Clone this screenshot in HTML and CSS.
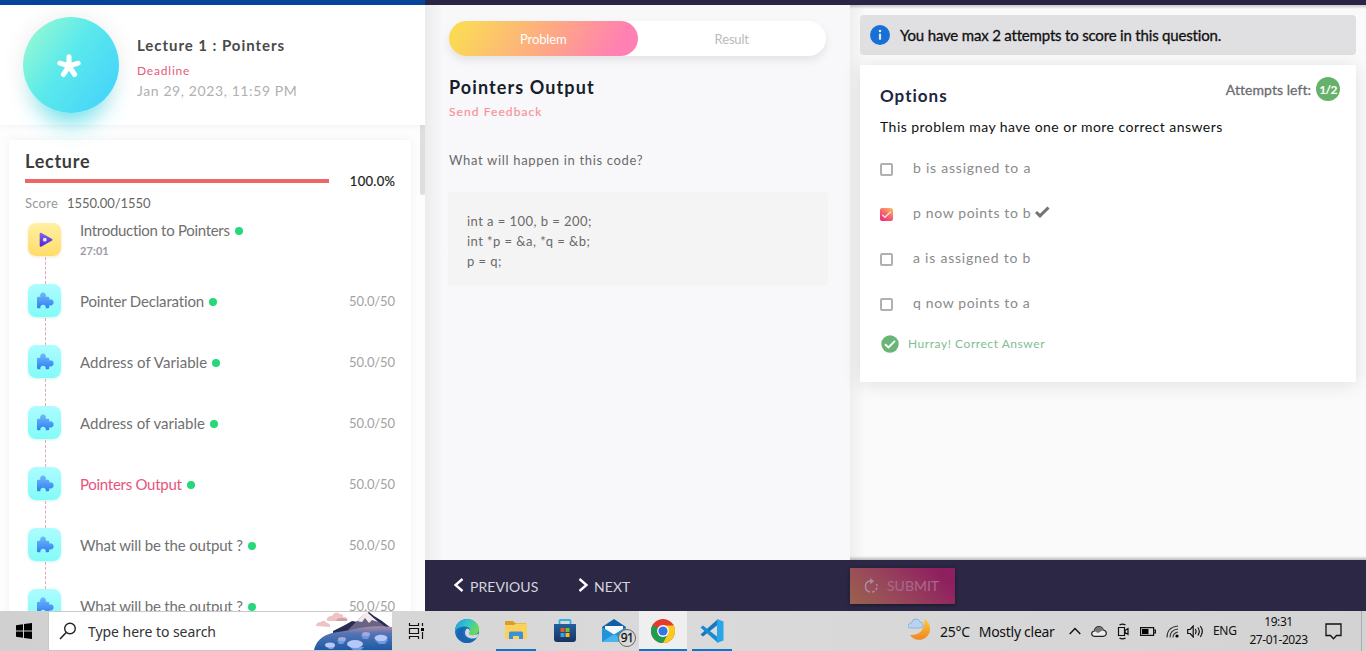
FILE: index.html
```html
<!DOCTYPE html>
<html lang="en">
<head>
<meta charset="utf-8">
<title>Lecture 1 : Pointers</title>
<link rel="stylesheet" href="styles.css">
</head>
<body>
<svg class="defs" width="0" height="0">
  <defs>
    <linearGradient id="puzzleFill" x1="0" y1="0" x2="0" y2="1"><stop offset="0" stop-color="#71b8fb"/><stop offset="1" stop-color="#2f80f0"/></linearGradient>
    <linearGradient id="playFill" x1="0" y1="0" x2="0" y2="1"><stop offset="0" stop-color="#8265e8"/><stop offset="1" stop-color="#5420d8"/></linearGradient>
    <symbol id="puzzle" viewBox="0 0 17 17"><path fill="url(#puzzleFill)" d="M1.200 4.800H3.400A2.900 2.900 0 1 1 8.600 4.800H11Q12.200 4.800 12.200 6V7.600A3.100 3.100 0 1 1 12.200 13.200V15Q12.200 16.200 11 16.200H8.800A2.800 2.800 0 1 0 3.400 16.200H1.200Q0 16.200 0 15V6Q0 4.800 1.200 4.800z"/></symbol>
  </defs>
</svg>
<div class="page">
  <div class="workspace">
    <aside class="sidebar">
      <header class="lecture-head">
        <div class="avatar"><svg width="24" height="24" viewBox="0 0 24 24"><g stroke="#fff" stroke-width="5" stroke-linecap="round"><path d="M12 12V2.800M12 12L2.800 9.200M12 12l9.200-2.800M12 12L6.400 20.500M12 12l5.600 8.500"/></g></svg></div>
        <div class="lecture-info">
          <div class="lecture-title">Lecture 1 : Pointers</div>
          <div class="deadline">Deadline</div>
          <div class="due">Jan 29, 2023, 11:59 PM</div>
        </div>
      </header>
      <div class="lecture-scroll">
        <div class="scroll-thumb"></div>
        <section class="lecture-card">
          <h2>Lecture</h2>
          <div class="progress-row"><div class="progress"></div><span>100.0%</span></div>
          <div class="score"><span>Score</span><b>1550.00/1550</b></div>
          <ul class="steps">
            <li><i class="tile video"><svg width="14" height="16" viewBox="0 0 14 16"><path fill="url(#playFill)" d="M.7 2.200Q.7.200 2.500 1l10.200 5.700q1.600 1 0 2L2.500 14.600Q.7 15.400.7 13.400z"/><circle cx="5.800" cy="7.700" r="1.900" fill="#c9f6ff"/></svg></i><div class="name intro">Introduction to Pointers<em></em><small>27:01</small></div></li>
            <li><i class="tile"><svg width="17" height="17"><use href="#puzzle"/></svg></i><div class="name n2">Pointer Declaration<em></em></div><span class="pts">50.0/50</span></li>
            <li><i class="tile"><svg width="17" height="17"><use href="#puzzle"/></svg></i><div class="name n3">Address of Variable<em></em></div><span class="pts">50.0/50</span></li>
            <li><i class="tile"><svg width="17" height="17"><use href="#puzzle"/></svg></i><div class="name n4">Address of variable<em></em></div><span class="pts">50.0/50</span></li>
            <li><i class="tile"><svg width="17" height="17"><use href="#puzzle"/></svg></i><div class="name n5 current">Pointers Output<em></em></div><span class="pts">50.0/50</span></li>
            <li><i class="tile"><svg width="17" height="17"><use href="#puzzle"/></svg></i><div class="name n6">What will be the output ?<em></em></div><span class="pts">50.0/50</span></li>
            <li><i class="tile"><svg width="17" height="17"><use href="#puzzle"/></svg></i><div class="name n6">What will be the output ?<em></em></div><span class="pts">50.0/50</span></li>
          </ul>
        </section>
      </div>
    </aside>
    <main class="main">
      <div class="topbar"></div>
      <div class="panes">
        <section class="problem">
          <div class="tabs"><div class="tab active">Problem</div><div class="tab">Result</div></div>
          <h1>Pointers Output</h1>
          <div class="feedback">Send Feedback</div>
          <p class="question">What will happen in this code?</p>
          <div class="code"><div>int a = 100, b = 200;</div><div>int *p = &amp;a, *q = &amp;b;</div><div>p = q;</div></div>
        </section>
        <section class="answer">
          <div class="notice"><svg width="20" height="20" viewBox="0 0 20 20"><circle cx="10" cy="10" r="10" fill="#1a6fd6"/><circle cx="10" cy="6" r="1.300" fill="#dcebfc"/><path d="M10 8.700v6" stroke="#dcebfc" stroke-width="2.200"/></svg><span>You have max 2 attempts to score in this question.</span></div>
          <div class="options">
            <div class="options-head"><h2>Options</h2><div class="attempts"><span>Attempts left:</span><b>1/2</b></div></div>
            <p class="hint">This problem may have one or more correct answers</p>
            <div class="option"><i class="box"></i><span>b is assigned to a</span></div>
            <div class="option"><i class="box checked"><svg width="13" height="13" viewBox="0 0 13 13"><path d="M2.300 6.800l2.700 2.500 5.700-5.500" fill="none" stroke="#ffe3dc" stroke-width="1.300"/></svg></i><span class="p">p now points to b</span><svg class="tick" width="15" height="12" viewBox="0 0 15 12"><path d="M1 6l4 3.800L13.500 1.500" fill="none" stroke="#737373" stroke-width="3"/></svg></div>
            <div class="option"><i class="box"></i><span>a is assigned to b</span></div>
            <div class="option"><i class="box"></i><span class="p">q now points to a</span></div>
            <div class="success"><svg width="18" height="18" viewBox="0 0 18 18"><circle cx="9" cy="9" r="8.700" fill="#69b578"/><path d="M4 9.200l3.500 3.300L14 5.800" fill="none" stroke="#fff" stroke-width="1.900"/></svg><span>Hurray! Correct Answer</span></div>
          </div>
        </section>
      </div>
      <footer class="actions">
        <div class="nav prev"><svg width="10" height="14" viewBox="0 0 10 14"><path d="M8.500 1L1.500 7l7 6" fill="none" stroke="#fff" stroke-width="2.400"/></svg><span>PREVIOUS</span></div>
        <div class="nav next"><svg width="10" height="14" viewBox="0 0 10 14"><path d="M1.500 1l7 6-7 6" fill="none" stroke="#fff" stroke-width="2.400"/></svg><span>NEXT</span></div>
        <div class="submit"><svg width="14" height="16" viewBox="0 0 14 16"><g fill="none" stroke="#a98ba7" stroke-width="1.500"><path d="M6 14A5.600 5.600 0 0 1 6 3h2"/><path d="M8 14a5.600 5.600 0 0 0 4.500-8" stroke-dasharray="2.600 1.700"/></g><path d="M6.200 0L10 3.200 6.200 6.200z" fill="#a98ba7"/></svg><span>SUBMIT</span></div>
      </footer>
    </main>
  </div>
  <nav class="taskbar">
    <div class="start"><svg width="16" height="16" viewBox="0 0 16 16"><path d="M0 2.300l7-1V7.600H0zM8 1.100L16 0v7.600H8zM0 8.500h7v6.300l-7-1zM8 8.500h8V16l-8-1.100z"/></svg></div>
    <div class="search"><svg class="lens" width="18" height="18" viewBox="0 0 18 18"><circle cx="11" cy="6.500" r="5.300" fill="none" stroke="#222" stroke-width="1.400"/><path d="M7.200 10.500L1 17" stroke="#222" stroke-width="1.600"/></svg><span>Type here to search</span>
      <svg class="scene" width="78" height="38" viewBox="0 0 78 38">
        <defs><linearGradient id="lake" x1="0" y1="0" x2="0" y2="1"><stop offset="0" stop-color="#b18ba6"/><stop offset=".3" stop-color="#5575b5"/><stop offset="1" stop-color="#1c5aa5"/></linearGradient></defs>
        <path d="M13 9q-1-5 5-5 3-6 8-2 4 0 3 3 6 0 4 4zM2 14q0-4 5-4 3-3 6 1 4 1 3 4z" fill="#edc3c5"/><path d="M22 9q2-5 11-2v2z" fill="#d69ca7"/>
        <path d="M19 19l12-6 7-4 6 1 6-7 5-3 5 4 8 5 9 7v9H19z" fill="#2a2c55"/><path d="M38 14l10-10 4-3 6 4 7 5 11 8H34z" fill="#686483"/><path d="M43 9l8-8 3 0 10 9-6-2-3 3-4-5-3 4z" fill="#f4e9ed"/>
        <path d="M0 38q3-13 18-17 14-2 28-5t32-1v23z" fill="url(#lake)"/>
        <g fill="#6d99e2"><path d="M13 34l2 3h4l2-3z"/><path d="M36 35l3 3h8l3-3z"/><path d="M61 28l4 4h6l3-4zM47 23l2 4h5l2-4zM23 28l2 4h4l3-4z"/></g><g fill="#b6c8f7"><ellipse cx="16" cy="33" rx="5" ry="2.600"/><ellipse cx="41" cy="32" rx="8" ry="4"/><ellipse cx="67" cy="26" rx="6.500" ry="3.300"/><ellipse cx="52" cy="22" rx="4" ry="2" fill="#a9a8d5"/><ellipse cx="28" cy="27" rx="4" ry="2" fill="#a9a8d5"/></g>
      </svg>
    </div>
    <div class="app view"><svg width="17" height="16" viewBox="0 0 17 16"><path d="M1.500 0v2.500h9V0M1.500 16v-2.500h9V16M1.500 5.500h9v5h-9zM14.500 0v3M14.500 9v7" fill="none" stroke="#111" stroke-width="1.200"/><path d="M13 5h3v3h-3z"/></svg></div>
    <div class="app"><svg width="24" height="24" viewBox="0 0 24 24"><defs><linearGradient id="edgeTop" x1="0" y1="0" x2="1" y2=".5"><stop offset="0" stop-color="#2497d9"/><stop offset=".5" stop-color="#31c4d0"/><stop offset="1" stop-color="#68dc55"/></linearGradient></defs><circle cx="12" cy="12" r="12" fill="#176fbd"/><path d="M0 12C0 5 5.500 0 12 0s12 5 12 10c0 4-3 6.200-6.500 6.200-3 0-4-1.500-3-2.800 2-2.600-.4-6-4.500-6S1 9 0 13z" fill="url(#edgeTop)"/><path d="M9 10c-3 5 1 11 7 11q4 0 6-3-4 6-10 6C5 24 1 18 3 13q2-4 6-3z" fill="#1b63ae"/><path d="M14.500 13.400c-1 1.300 0 2.800 3 2.800 2 0 3.700-.5 5.800-1.700L22.600 18q-3.600 2.500-8 1C9 17.500 9 12 12 9.500q4 1 2.500 3.900z" fill="#d8d8da"/></svg></div>
    <div class="app open explorer"><svg width="22" height="20" viewBox="0 0 22 20"><path d="M0 1q0-1 1-1h7l2 2h11v3H0z" fill="#dd9e20"/><path d="M0 4h9l2-1.500h11V18H0z" fill="#fbd15d"/><path d="M4 18v-6q0-1.500 1.500-1.500h11Q18 10.500 18 12v6h-4v-3H8v3z" fill="#3a91d8"/></svg></div>
    <div class="app"><svg width="24" height="24" viewBox="0 0 24 24"><defs><linearGradient id="store" x1="0" y1="0" x2="0" y2="1"><stop offset="0" stop-color="#245f9e"/><stop offset="1" stop-color="#18325f"/></linearGradient></defs><path d="M6.500 6V1.800q0-.8.800-.8h9.400q.8 0 .8.800V6" fill="none" stroke="#2fb3e6" stroke-width="1.800"/><path d="M1 5h22v15q0 3-3 3H4q-3 0-3-3z" fill="url(#store)"/><path d="M7.500 9h4v4h-4z" fill="#f05325"/><path d="M12.500 9h4v4h-4z" fill="#80ba30"/><path d="M7.500 14h4v4h-4z" fill="#2aa5e9"/><path d="M12.500 14h4v4h-4z" fill="#fbba12"/></svg></div>
    <div class="app mail"><svg width="24" height="24" viewBox="0 0 24 24"><path d="M0 8L12 0l12 8v15H0z" fill="#0f5fa8"/><path d="M3 7h18v8H3z" fill="#f5f9fd"/><path d="M0 8l12 7.500L24 8v15H0z" fill="#2294da"/><path d="M0 23l12-8 12 8z" fill="#48b5ec"/></svg><span class="count">91</span></div>
    <div class="app active open"><svg width="24" height="24" viewBox="0 0 24 24"><circle cx="12" cy="12" r="12" fill="#e33b2e"/><path d="M12 12L1.600 6A12 12 0 0 0 12 24l6-9z" fill="#219c4f"/><path d="M12 6.500h10.700A12 12 0 0 1 12 24l5-9.300z" fill="#fbc820"/><circle cx="12" cy="12" r="5.900" fill="#fff"/><circle cx="12" cy="12" r="4.600" fill="#3473e8"/></svg></div>
    <div class="app open vscode"><svg width="24" height="24" viewBox="0 0 24 24"><path d="M17.500 6L3 17.500.5 15.500 17.500.5z" fill="#1678be"/><path d="M17.500 18L3 6.500.5 8.500l17 15z" fill="#168dd2"/><path d="M17 0l6.500 2.600v18.800L17 24z" fill="#2aa5ea"/></svg></div>
    <div class="weather"><svg width="24" height="24" viewBox="0 0 24 24"><defs><linearGradient id="moon" x1="0" y1="0" x2="0" y2="1"><stop offset="0" stop-color="#ffc83d"/><stop offset="1" stop-color="#ee8724"/></linearGradient></defs><path d="M16 1a11 11 0 1 1-14 16q9 0 12-5t2-11z" fill="url(#moon)"/><path d="M3 10q-4 0-2.500-3Q1 5 3.500 5 4 1 8 1q3 0 4 3 3 0 3 3t-3 3z" fill="#b9d3f1" stroke="#7fa9d9" stroke-width=".8"/></svg><span>25°C</span><span class="sky">Mostly clear</span></div>
    <div class="tray">
      <svg class="t1" width="12" height="8" viewBox="0 0 12 8"><path d="M.7 7L6 1.500 11.300 7" fill="none" stroke="#111" stroke-width="1.400"/></svg>
      <svg class="t2" width="16" height="11" viewBox="0 0 16 11"><path d="M3.500 10.300Q.7 10 .7 7.700T3.300 5q1-4.300 4.700-4.300Q11 .7 12.300 4q3 .5 3 3.300T12 10.300z" fill="#ededed" stroke="#222" stroke-width="1.200"/><path d="M3.300 5Q5 .7 8 .7T12.300 4L7 7z" fill="#777"/></svg>
      <svg class="t3" width="12" height="17" viewBox="0 0 12 17"><path d="M2.500 2q3-1.800 6 0M2.500 15q3 1.800 6 0M1.500 4.500h6v8h-6zM8 7.500l3-2v6l-3-2z" fill="none" stroke="#111" stroke-width="1.200"/></svg>
      <svg class="t4" width="16" height="9" viewBox="0 0 16 9"><path d="M.6.600h13v7.800H.6zM14 3h1.400v3H14" fill="none" stroke="#111" stroke-width="1.200"/><path d="M2 2h6.500v5H2z"/></svg>
      <svg class="t5" width="13" height="13" viewBox="0 0 13 13"><path d="M1 12.500Q1 2 12 1M4 12.500Q4 5 12 4M7 12.500Q7 8 12 7" fill="none" stroke="#333" stroke-width="1.100"/><circle cx="11" cy="11" r="1.600"/></svg>
      <svg class="t6" width="17" height="13" viewBox="0 0 17 13"><path d="M.7 4.500h2.500l3-3.500v11l-3-3.500H.7zM8.300 4q1.500 2.500 0 5M10.800 2.500q3 4 0 8M13.300 1q4 5.500 0 11" fill="none" stroke="#111" stroke-width="1.200"/></svg>
      <span class="lang">ENG</span>
      <div class="clock"><span>19:31</span><span>27-01-2023</span></div>
      <svg class="t7" width="17" height="17" viewBox="0 0 17 17"><path d="M1 1h15v11.500h-4.500L8.500 15.700 5.500 12.500H1z" fill="none" stroke="#111" stroke-width="1.300"/></svg>
    </div>
  </nav>
</div>
</body>
</html>
```
FILE: styles.css
```css
* { box-sizing: border-box; }
body { margin: 0; width: 1366px; height: 651px; overflow: hidden; font-family: Lato, "Open Sans", sans-serif; font-variant-ligatures: none; background: #f8f8fb; }
h1, h2, p, ul { margin: 0; padding: 0; }
.defs { position: absolute; }
svg { display: block; flex: none; }
span, .name, h1, h2 { white-space: nowrap; }
.page { display: flex; flex-direction: column; height: 651px; }
.workspace { display: flex; height: 611px; }

.sidebar { width: 425px; border-top: 5px solid #07439b; background: #fdfdfd; overflow: hidden; flex: none; }
.lecture-head { position: relative; display: flex; height: 120px; padding: 12px 0 0 22.500px; background: #fff; box-shadow: 0 1px 5px rgba(0,0,0,.05); z-index: 1; }
.avatar { width: 96px; height: 96px; border-radius: 50%; background: linear-gradient(125deg, #9dfbcf 3%, #5be9ec 45%, #43d1fc 95%); box-shadow: 0 24px 24px -14px rgba(45,218,232,.7), 0 0 24px rgba(0,0,0,.08); padding: 37px 0 0 34px; }
.lecture-info { padding: 18px 0 0 18.500px; }
.lecture-title { font-size: 15px; font-weight: 700; line-height: 20px; letter-spacing: .95px; color: #4a4a4a; }
.deadline { margin-top: 6px; font-size: 12px; line-height: 20px; letter-spacing: .8px; color: #e8587a; }
.due { font-size: 14px; line-height: 20px; letter-spacing: .6px; color: #b0b0b0; }
.lecture-scroll { position: relative; height: 486px; padding: 15px 14px 0 9px; }
.scroll-thumb { position: absolute; left: 420px; top: 0; width: 5px; height: 70px; border-radius: 0 0 3px 3px; background: #dedede; }
.lecture-card { height: 560px; padding: 10px 16px 0; background: #fff; box-shadow: 0 0 8px rgba(0,0,0,.05); }
.lecture-card h2 { font-size: 18px; line-height: 23px; font-weight: 700; letter-spacing: .75px; color: #3c3c3c; }
.progress-row { display: flex; align-items: center; justify-content: space-between; height: 16px; }
.progress-row span { font-size: 13px; color: #222; letter-spacing: .3px; margin-right: -.3px; -webkit-text-stroke: .2px #222; }
.progress { width: 304px; height: 4px; background: #ee6667; }
.score { display: flex; gap: 9px; margin-top: 4px; font-size: 13px; line-height: 20px; color: #999; }
.score span { width: 33px; letter-spacing: .25px; }
.score b { font-weight: 400; color: #666; letter-spacing: -.08px; }
.steps { list-style: none; padding-top: 10px; }
.steps li { position: relative; display: flex; height: 61px; padding-left: 3px; }
.steps li::before { content: ""; position: absolute; left: 20px; top: 34px; height: 27px; border-left: 1px dashed #e8a6ae; }
.tile { width: 33px; height: 33px; border-radius: 8px; background: linear-gradient(#adfcff, #82fbf7); box-shadow: 0 1px 3px rgba(100,220,220,.3); display: flex; align-items: center; justify-content: center; flex: none; padding-left: 2px; }
.tile.video { background: linear-gradient(#fff0a4, #ffdc69); box-shadow: 0 1px 3px rgba(220,180,80,.3); padding-left: 3px; }
.name { margin: 7px 0 0 19px; font-size: 15px; line-height: 20px; color: #707070; }
.name.intro { margin-top: -3px; letter-spacing: -.3px; }
.n2 { letter-spacing: -.17px; }
.n3 { letter-spacing: .05px; }
.n5 { letter-spacing: -.28px; }
.n6 { letter-spacing: -.17px; }
.name em { display: inline-block; width: 8px; height: 8px; margin-left: 5px; border-radius: 50%; background: #26d879; vertical-align: 1px; }
.name small { display: block; font-size: 11px; line-height: 22px; font-weight: 700; color: #999aa5; letter-spacing: .1px; }
.name.current { color: #e7547b; }
.pts { margin: 7px 0 0 auto; font-size: 13px; line-height: 20px; letter-spacing: -.1px; color: #a2a2a2; }

.main { display: flex; flex-direction: column; width: 941px; }
.topbar { height: 5px; background: #2a2544; }
.panes { display: flex; height: 555px; }
.problem { width: 425px; padding: 16px 24px 0; background: linear-gradient(90deg, #ececef, #f8f8fb 18px); flex: none; }
.tabs { display: flex; width: 377px; height: 35px; border-radius: 18px; background: #fff; box-shadow: 0 4px 10px rgba(0,0,0,.09); }
.tab { width: 189px; line-height: 36px; font-size: 13px; letter-spacing: -.15px; text-align: center; color: #bbb; }
.tab.active { border-radius: 18px; color: #fff; background: linear-gradient(120deg, #fad957 8%, #fea08d 60%, #ff80b2 88%); }
.problem h1 { margin-top: 19px; font-size: 18px; line-height: 24px; font-weight: 700; letter-spacing: 1.100px; color: #171d29; }
.feedback { margin-top: 3px; font-size: 12px; line-height: 20px; letter-spacing: 1.080px; color: #f79398; -webkit-text-stroke: .2px #f79398; }
.question { margin-top: 28px; font-size: 13px; line-height: 20px; letter-spacing: .67px; color: #6a6a6a; }
.code { width: 378px; height: 92px; margin-top: 23px; padding: 18px; border-radius: 3px; background: #f4f4f4; box-shadow: 0 0 2px rgba(0,0,0,.06); font-size: 13px; line-height: 20px; letter-spacing: .45px; color: #6a6a6a; }
.answer { width: 516px; padding: 10px; background: linear-gradient(90deg, #efefef, #fafafa 16px); position: relative; }
.answer::before, .answer::after { content: ""; position: absolute; left: 0; right: 0; height: 4px; }
.answer::before { top: 0; background: linear-gradient(rgba(0,0,0,.2), transparent); }
.answer::after { bottom: 0; background: linear-gradient(transparent, rgba(0,0,0,.25)); }
.notice { display: flex; align-items: center; gap: 10px; height: 40px; padding: 0 10px; border-radius: 4px; background: #e0e0e2; font-size: 15px; letter-spacing: -.18px; color: #111; -webkit-text-stroke: .3px #111; }
.options { height: 317px; margin-top: 10px; padding: 12px 16px 0 20px; background: #fff; box-shadow: 0 2px 18px rgba(0,0,0,.11); }
.options-head { display: flex; justify-content: space-between; height: 38px; }
.options h2 { margin-top: 7px; font-size: 17px; line-height: 24px; letter-spacing: 1px; color: #1d2540; }
.attempts { display: flex; height: 24px; gap: 5px; font-size: 14px; line-height: 25px; letter-spacing: .05px; color: #6b6b70; -webkit-text-stroke: .3px #6b6b70; }
.attempts b { width: 24px; border-radius: 50%; background: #66b26a; color: #fff; text-align: center; font-size: 12px; letter-spacing: -.7px; -webkit-text-stroke: 0; }
.hint { margin-top: 2px; font-size: 14px; line-height: 20px; letter-spacing: .46px; color: #111; }
.option { display: flex; height: 45px; align-items: center; font-size: 14px; color: #8a8a8a; }
.hint + .option { margin-top: 9px; }
.option span { letter-spacing: .77px; line-height: 20px; margin-top: -2px; }
.option .p { letter-spacing: .65px; }
.box { width: 13px; height: 13px; margin: 2px 20px 0 0; border: 2px solid #b0b0b0; border-radius: 2px; }
.box.checked { border: 0; background: linear-gradient(35deg, #ee277b, #f5656d 50%, #f9c668); }
.tick { margin: -3px 0 0 4px; }
.success { display: flex; align-items: center; gap: 9px; height: 20px; margin: 8px 0 0 1px; font-size: 12px; letter-spacing: .55px; color: #81bd91; }
.success span { margin-top: -2px; }
.actions { display: flex; align-items: center; height: 51px; padding-left: 29px; background: #2b2745; }
.nav { display: flex; align-items: center; gap: 6px; font-size: 14px; color: #d5d5df; letter-spacing: .08px; padding-top: 1px; }
.nav svg { margin-top: -2px; }
.prev { width: 124px; }
.next { width: 272px; }
.submit { display: flex; align-items: center; gap: 9px; width: 105px; height: 36px; padding-left: 14px; background: linear-gradient(45deg, #9a624d, #97425c 45%, #8f205f 85%); box-shadow: 0 1px 4px rgba(0,0,0,.4); color: #a86788; font-size: 14px; -webkit-text-stroke: .2px #a86788; }

.taskbar { display: flex; height: 40px; background: linear-gradient(90deg, #d0d0d0, #dadada 50%, #d3d3d3); font-family: "Noto Sans", "Open Sans", sans-serif; color: #111; }
.start { width: 48px; padding: 12px 0 0 16px; }
.search { display: flex; align-items: center; width: 344px; padding-left: 10px; border: 1px solid #c9c9c9; border-right: 0; background: #fff; font-size: 14px; letter-spacing: -.05px; color: #333; }
.lens { margin-right: 11px; }
.scene { margin-left: auto; }
.app { position: relative; display: flex; align-items: center; justify-content: center; width: 48px; margin-right: 1px; }
.app.view { margin-right: 3px; }
.app.open::after { content: ""; position: absolute; left: 4px; right: 4px; bottom: 0; height: 2px; background: #0878cf; }
.app.active { background: #efeff0; }
.app.active::after { left: 0; right: 0; }
.count { position: absolute; left: 28px; top: 18px; width: 18px; height: 18px; border: 1px solid #666; border-radius: 50%; background: #dadada; font-size: 12px; line-height: 16px; text-align: center; letter-spacing: -.5px; -webkit-text-stroke: .3px #111; }
.weather { display: flex; align-items: center; margin-left: 171px; font-size: 14px; width: 161px; letter-spacing: -.28px; }
.weather svg { margin: -2px 8px 0 0; }
.sky { margin-left: 9px; }
.tray { display: flex; align-items: center; width: 293px; border-right: 1px solid #aaa; font-size: 12px; }
.t2 { margin-left: 10px; }
.t3 { margin-left: 10px; }
.t4 { margin-left: 11px; }
.t5 { margin-left: 10px; }
.t6 { margin-left: 8px; }
.lang { width: 24px; margin: -1px 0 0 9px; letter-spacing: -.3px; }
.clock { display: flex; flex-direction: column; align-items: center; width: 59px; margin-left: 12px; line-height: 18px; letter-spacing: -.45px; }
.t7 { margin-left: 17px; }
```
